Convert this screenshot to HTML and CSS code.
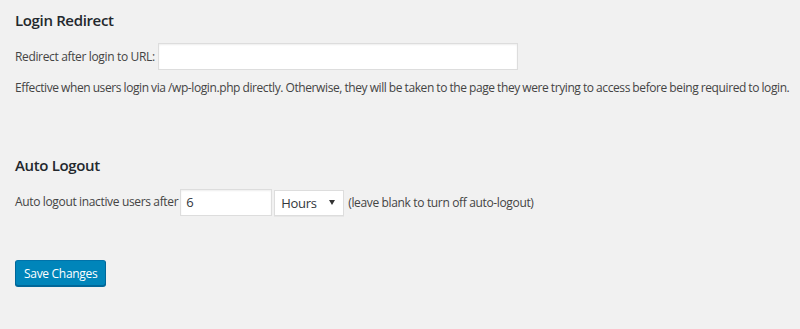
FILE: index.html
```html
<!DOCTYPE html>
<html lang="en">
  <head>
    <meta charset="UTF-8" />
    <meta name="viewport" content="width=device-width, initial-scale=1.0" />
    <title>Settings</title>
    <link rel="stylesheet" href="styles.css">
  </head>
  <body>
    <div class="wrap">
      <!-- Login redirect -->
      <h2>Login Redirect</h2>
      <div class="form-row">
        <label for="redirectUrl">Redirect after login to URL:</label>
        <input type="text" id="redirectUrl" class="url-input" />
      </div>
      <p class="description">
        Effective when users login via /wp-login.php directly. Otherwise, they will be taken to the page they were trying to access before being required to login.
      </p>

      <!-- Auto logout -->
      <h2 class="section-gap">Auto Logout</h2>
      <div class="form-row">
        <label for="logoutTime">Auto logout inactive users after</label>
        <input type="text" id="logoutTime" class="num-input" value="6" />
        <select id="logoutUnit" class="unit-select">
          <option>Minutes</option>
          <option selected>Hours</option>
          <option>Days</option>
        </select>
        <span class="hint">(leave blank to turn off auto-logout)</span>
      </div>

      <button type="submit" class="btn">Save Changes</button>
    </div>
  </body>
</html>
```

FILE: styles.css
```css
* {
  margin: 0;
  padding: 0;
  box-sizing: border-box;
}

body {
  font-family: "Open Sans", Arial, sans-serif;
  font-size: 12px;
  letter-spacing: -0.35px;
  background-color: #f1f1f1;
  color: #444;
}

.wrap {
  padding: 10px 15px;
}

h2 {
  font-size: 15px;
  font-weight: 600;
  color: #23282d;
  line-height: 20px;
  margin-bottom: 13px;
}

.section-gap {
  margin-top: 58px;
}

.form-row {
  display: flex;
  align-items: center;
  gap: 2px;
  height: 27px;
}

.form-row + .btn {
  margin-top: 45px;
}

label {
  color: #444;
}

input,
select {
  font-family: inherit;
  font-size: 13px;
  letter-spacing: -0.3px;
  color: #32373c;
  background: #fff;
  border: 1px solid #ddd;
  box-shadow: inset 0 1px 2px rgba(0, 0, 0, 0.07);
  height: 27px;
  padding: 3px 5px;
  outline: none;
}

.url-input {
  width: 360px;
  margin-left: 1px;
}

.num-input {
  width: 92px;
  margin-top: 1px;
}

.unit-select {
  width: 70px;
  height: 26px;
  margin-top: 2px;
  -webkit-appearance: none;
  appearance: none;
  padding: 2px 6px;
  background: #fff url("data:image/svg+xml;utf8,<svg xmlns='http://www.w3.org/2000/svg' width='6' height='5'><path d='M0 0h6L3 5z' fill='%23333'/></svg>") no-repeat right 8px center;
  box-shadow: 0 1px 0 rgba(0, 0, 0, 0.04);
}

.hint {
  margin-left: 2px;
  margin-top: 1px;
}

.description {
  margin-top: 9px;
  line-height: 18px;
  letter-spacing: -0.4px;
  word-spacing: -0.3px;
  white-space: nowrap;
}

.btn {
  background-color: #0085ba;
  color: #fff;
  font-family: inherit;
  font-size: 12px;
  letter-spacing: -0.3px;
  height: 26px;
  padding: 0 8px;
  border: 1px solid #0073aa;
  border-color: #0073aa #006799 #006799;
  border-radius: 3px;
  box-shadow: 0 1px 0 #006799;
  cursor: pointer;
}

.btn:hover {
  background-color: #008ec2;
}
```
